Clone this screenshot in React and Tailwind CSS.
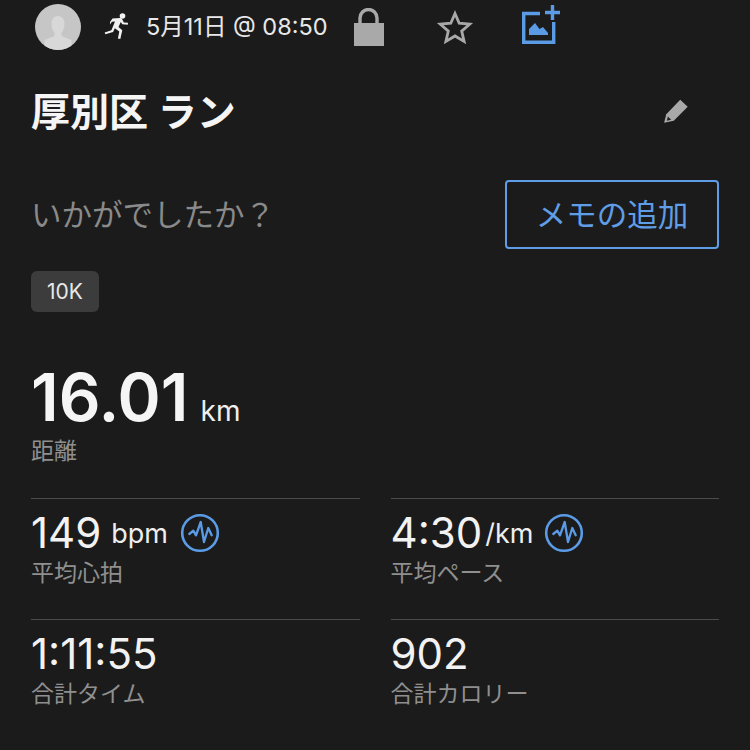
const font = { fontFamily: 'Inter, "Noto Sans CJK JP", sans-serif' };

function Pulse({ className }) {
  return (
    <svg viewBox="0 0 40 40" className={className} fill="none" stroke="#5b9be6">
      <circle cx="20" cy="20" r="17.8" strokeWidth="2.6" />
      <path d="M9.300 21l4-3.300 2.700 4.600 4.700-13.300 3.300 20 4.300-14 3.400 7.300" strokeWidth="2.300" strokeLinejoin="round" strokeLinecap="round" />
    </svg>
  );
}

function Runner() {
  return (
    <svg viewBox="0 0 26 26" className="w-[26px] h-[26px] -mt-[2px]" fill="#f2f2f2">
      <circle cx="19.500" cy="3" r="2.800" />
      <path d="M7 9l2.500-3.500 7.500-.5c1 0 1.700.5 2.200 1.300l1.600 3.200 4.200.3-.2 1.900-5.500-.4-1.500-2.300-2.300 5 3.800 3.300-2 8.700-2.400-.5 1.400-7-4.500-3.200-1.700 3.700-7.800 2.300-.6-1.900 6.700-2.200 3.600-8.700-3.100.3-1.800 2.800z" />
    </svg>
  );
}

function Avatar() {
  return (
    <svg viewBox="0 0 46 46" className="w-[46px] h-[46px] shrink-0">
      <circle cx="23" cy="23" r="23" fill="#c6c6c6" />
      <clipPath id="av"><circle cx="23" cy="23" r="23" /></clipPath>
      <g clipPath="url(#av)" fill="#d8d8d8">
        <path d="M23 12c4 0 6.500 3 6.500 7.500 0 4-1.500 7.500-3 9.500v3l10 4v10h-27V36l10-4v-3c-1.500-2-3-5.500-3-9.500C16.500 15 19 12 23 12z" />
      </g>
    </svg>
  );
}

function Lock() {
  return (
    <svg viewBox="0 0 32 38" className="w-[32px] h-[38px]" fill="none">
      <path d="M7 16V10a8.500 8.500 0 0 1 17 0v6" stroke="#a9a9a9" strokeWidth="3.400" />
      <rect x="1" y="15" width="30" height="23" fill="#a9a9a9" />
    </svg>
  );
}

function StarIcon() {
  return (
    <svg viewBox="0 0 38 36" className="w-[38px] h-[36px]" fill="none">
      <path d="M19 4.500l4.200 9.700 10.500 1-8 6.900 2.400 10.300-9.100-5.400-9.100 5.400 2.400-10.300-8-6.900 10.500-1z" stroke="#a9a9a9" strokeWidth="2.800" strokeLinejoin="miter" />
    </svg>
  );
}

function AddPhoto() {
  return (
    <svg viewBox="0 0 41 40" className="w-[41px] h-[40px]" fill="none">
      <path d="M19 8.500H2.700V37.300H32.700V17" stroke="#5b9be6" strokeWidth="3.400" />
      <path d="M31.500 0v15M24 7.500h15" stroke="#5b9be6" strokeWidth="3.400" />
      <path d="M8 30v-6l6-6 4.500 6 3.500-2 5 6v2z" fill="#5b9be6" />
    </svg>
  );
}

function Pencil() {
  return (
    <svg viewBox="0 0 28 28" className="w-[30px] h-[30px] -mt-[5px]">
      <path d="M2 26l2-8L17 4.500l7 6.500L11 24z" fill="#a9a9a9" />
      <path d="M4.500 24l1-4 3 3z" fill="#222" />
    </svg>
  );
}

function Metric({ value, unit, label, pulse, unitClass }) {
  return (
    <div className="border-t border-[#4b4b4b] h-[121px] pt-[11px]">
      <div className="flex items-center h-[46px]">
        <span className="text-[42px] leading-none text-[#f2f2f2]">{value}</span>
        {unit && <span className={`text-[27px] leading-none text-[#eeeeee] ${unitClass}`}>{unit}</span>}
        {pulse && <Pulse className={`w-[40px] h-[40px] ${pulse}`} />}
      </div>
      <div className="mt-[2px] text-[23px] leading-[30px] text-[#8f8f8f]">{label}</div>
    </div>
  );
}

export default function App() {
  return (
    <div className="w-[750px] h-[750px] overflow-hidden bg-[#1b1b1b] px-[31px]" style={font}>
      <div className="flex items-center h-[52px] pl-[4px] pt-[1px]">
        <Avatar />
        <div className="ml-[22px]"><Runner /></div>
        <span className="ml-[17px] text-[23.500px] text-[#e8e8e8] whitespace-nowrap">5月11日 @ 08:50</span>
        <div className="ml-[25px]"><Lock /></div>
        <div className="ml-[51px]"><StarIcon /></div>
        <div className="ml-[47px] -mt-[3px]"><AddPhoto /></div>
      </div>

      <div className="flex items-center justify-between mt-[36px] pr-[27px]">
        <h1 className="text-[39px] leading-[48px] font-semibold text-[#f5f5f5]">厚別区 ラン</h1>
        <Pencil />
      </div>

      <div className="flex items-center justify-between mt-[44px]">
        <span className="text-[30.500px] text-[#8a8a8a]">いかがでしたか？</span>
        <button className="w-[214px] h-[69px] rounded-[4px] border-2 border-[#5f9de6] text-[30.500px] text-[#5f9de6]">メモの追加</button>
      </div>

      <div className="mt-[22px] w-[68px] h-[41px] rounded-[6px] bg-[#3c3c3c] flex items-center justify-center text-[21px] text-[#e8e8e8]">10K</div>

      <div className="mt-[48px] flex items-baseline">
        <span className="text-[65.500px] leading-[76px] font-semibold text-[#f5f5f5]">16.01</span>
        <span className="ml-[12px] text-[28px] text-[#eeeeee]">km</span>
      </div>
      <div className="text-[23px] leading-[30px] text-[#8f8f8f]">距離</div>

      <div className="grid grid-cols-2 gap-x-[31px] mt-[32px]">
        <Metric value="149" unit="bpm" unitClass="ml-[10px]" pulse="ml-[12px]" label="平均心拍" />
        <Metric value="4:30" unit="/km" unitClass="ml-[3px]" pulse="ml-[11px]" label="平均ペース" />
        <Metric value="1:11:55" label="合計タイム" />
        <Metric value="902" label="合計カロリー" />
      </div>
    </div>
  );
}
